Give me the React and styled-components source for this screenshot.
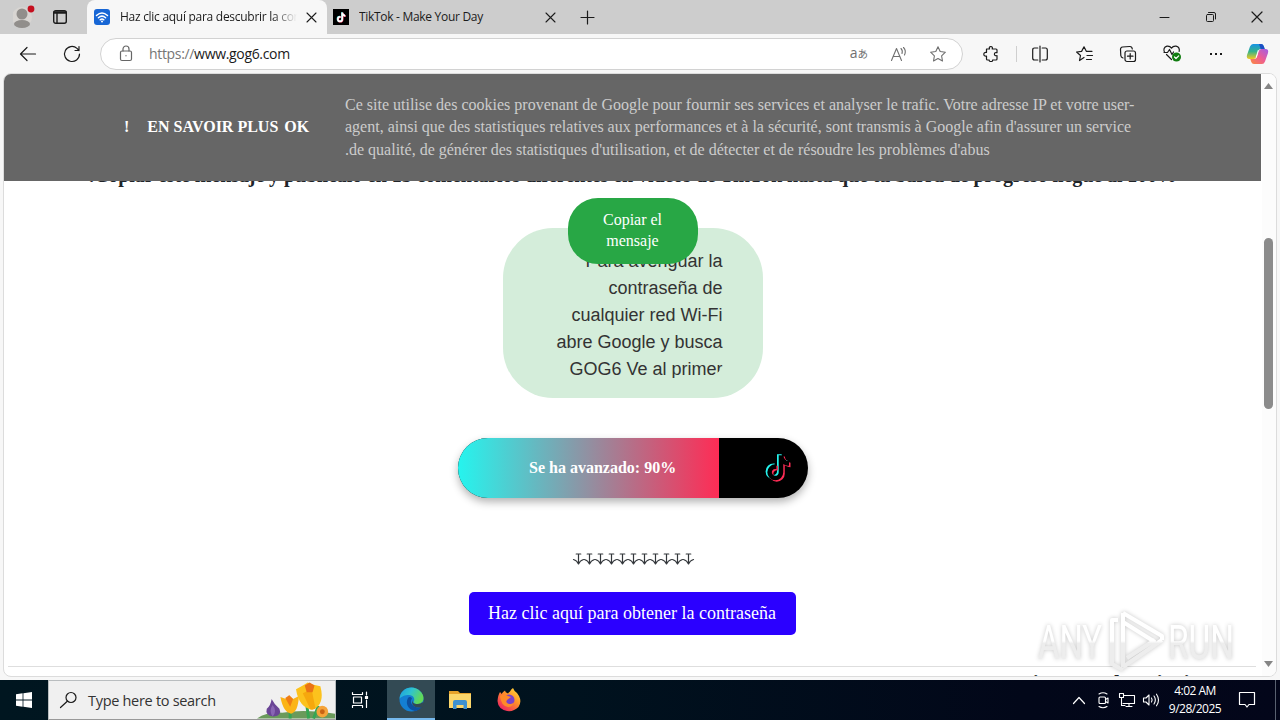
import styled, { createGlobalStyle, css } from 'styled-components';

// ========================== GLOBAL ==========================

const GlobalStyle = createGlobalStyle`
  * {
    box-sizing: border-box;
  }

  body {
    margin: 0;
    overflow: hidden;
    font-family: 'Open Sans', 'Noto Sans', sans-serif;
  }

  svg {
    display: block;
    flex-shrink: 0;
  }
`;

const Screen__styled = styled.div`
  width: 1280px;
  height: 720px;
  display: flex;
  flex-direction: column;
  overflow: hidden;
  background-color: #f7f7f7;
`;

const Stroke__styled = styled.svg`
  fill: none;
  stroke: ${props => props.$color || '#1b1b1b'};
  stroke-width: ${props => props.$weight || 1.2};
  stroke-linecap: round;
  stroke-linejoin: round;
  overflow: visible;
`;

// ========================== TABS ==========================

const TabBar__styled = styled.header`
  height: 34px;
  flex-shrink: 0;
  display: flex;
  align-items: center;
  background-color: #cdcdcd;
`;

const Profile__styled = styled.div`
  width: 87px;
  height: 34px;
  padding-left: 13px;
  display: flex;
  align-items: center;
  gap: 18px;
`;

const Tab__styled = styled.div`
  width: ${props => props.$width}px;
  height: 34px;
  padding: 0 11px 0 ${props => (props.$active ? 7 : 6)}px;
  display: flex;
  align-items: center;
  gap: 10px;

  ${props =>
    props.$active &&
    css`
      background-color: #f7f7f7;
      border-radius: 8px 8px 0 0;
    `};
`;

const TabTitle__styled = styled.span`
  flex: 1;
  overflow: hidden;
  white-space: nowrap;
  font-size: 12px;
  line-height: 18px;
  letter-spacing: ${props => props.$spacing}px;
  color: #1b1b1b;
  mask-image: ${props =>
    props.$fade ? 'linear-gradient(90deg, #000 86%, transparent 100%)' : 'none'};
`;

const NewTab__styled = styled.div`
  width: 42px;
  display: flex;
  justify-content: center;
`;

const WindowButtons__styled = styled.div`
  margin-left: auto;
  display: grid;
  grid-template-columns: repeat(3, 46px);
  justify-items: center;
  align-items: center;
`;

// ========================== TOOLBAR ==========================

const Toolbar__styled = styled.nav`
  height: 39px;
  flex-shrink: 0;
  padding-left: 20px;
  display: flex;
  align-items: center;
  background-color: #f7f7f7;
`;

const NavButtons__styled = styled.div`
  width: 80px;
  display: flex;
  gap: 28px;
`;

const AddressBar__styled = styled.div`
  width: 863px;
  height: 32px;
  padding: 0 16px 0 19px;
  display: flex;
  align-items: center;
  background-color: #fff;
  border: 1px solid #d2d2d2;
  border-radius: 16px;
`;

const Url__styled = styled.span`
  flex: 1;
  margin-left: 17px;
  font-size: 14px;
  letter-spacing: -0.33px;
  color: #1b1b1b;

  i {
    font-style: normal;
    color: #767676;
  }
`;

const AddressIcons__styled = styled.div`
  display: flex;
  align-items: center;
  gap: 23px;
`;

const Translate__styled = styled.span`
  font-size: 14px;
  line-height: 16px;
  color: #707070;

  small {
    font-family: 'Noto Sans CJK JP', sans-serif;
    font-size: 10.5px;
  }
`;

const ToolIcons__styled = styled.div`
  padding-left: 4px;
  display: grid;
  grid-template-columns: 48px 2px 45px repeat(4, 44px) 39px;
  align-items: center;
  justify-items: center;
`;

const Divider__styled = styled.div`
  width: 1px;
  height: 16px;
  background-color: #cfcfcf;
`;

// ========================== PAGE ==========================

const Frame__styled = styled.main`
  width: 1274px;
  height: 604px;
  margin: 0 0 3px 3px;
  flex-shrink: 0;
  display: flex;
  overflow: hidden;
  background-color: #fff;
  border: 1px solid #dcdcdc;
  border-radius: 8px;
`;

const Page__styled = styled.div`
  width: 1258px;
  height: 602px;
  display: flex;
  flex-direction: column;
  align-items: center;
  overflow: hidden;
  font-family: 'Liberation Serif', serif;
`;

const CookieBar__styled = styled.section`
  width: 1257px;
  height: 107px;
  flex-shrink: 0;
  align-self: flex-start;
  z-index: 1;
  padding-left: 120px;
  display: flex;
  align-items: center;
  background-color: #666;
`;

const CookieActions__styled = styled.div`
  width: 221px;
  padding-bottom: 2px;
  display: flex;
  font-size: 16px;
  font-weight: 700;
  line-height: 20px;
  color: #fff;

  span:nth-child(2) {
    margin: 0 6px 0 18px;
    white-space: nowrap;
  }
`;

const CookieText__styled = styled.p`
  margin: 0;
  font-size: 16px;
  line-height: 22.4px;
  color: #ccc;
  white-space: nowrap;
`;

const Instruction__styled = styled.h2`
  height: 30px;
  margin: -21px 0 8px;
  flex-shrink: 0;
  font-size: 20px;
  font-weight: 700;
  line-height: 30px;
  letter-spacing: -0.08px;
  color: #212529;
  white-space: nowrap;
`;

const CopyButton__styled = styled.button`
  width: 130px;
  height: 66px;
  flex-shrink: 0;
  z-index: 1;
  padding: 0 29px 3px 28px;
  border: 0;
  border-radius: 30px;
  background-color: #28a745;
  font-family: 'Liberation Serif', serif;
  font-size: 16px;
  line-height: 21px;
  color: #fff;
`;

const MessageBox__styled = styled.div`
  width: 260px;
  height: 170px;
  margin-top: -36px;
  flex-shrink: 0;
  padding: 20px 40px;
  border-radius: 50px;
  background-color: #d4edda;
`;

const Message__styled = styled.div`
  height: 130px;
  padding-right: 0.5px;
  overflow: hidden;
  border-radius: 26px / 14px;
  font-family: 'Liberation Sans', sans-serif;
  font-size: 18px;
  line-height: 27px;
  color: #333;
  text-align: right;
  white-space: nowrap;
`;

const Progress__styled = styled.div`
  width: 350px;
  height: 60px;
  margin-top: 40px;
  flex-shrink: 0;
  padding-right: 16px;
  display: flex;
  align-items: center;
  justify-content: space-between;
  overflow: hidden;
  border-radius: 30px;
  background-color: #000;
  box-shadow: 0 4px 8px rgba(0, 0, 0, 0.3);
`;

const ProgressFill__styled = styled.div`
  width: 261px;
  height: 60px;
  padding-left: 71px;
  background: linear-gradient(90deg, #25f4ee, #fe2c55);
  font-size: 16px;
  font-weight: 700;
  line-height: 60px;
  color: #fff;
`;

const Arrows__styled = styled.div`
  height: 24px;
  margin: 49px 0 0;
  flex-shrink: 0;
  display: flex;
  align-items: center;
`;

const PasswordButton__styled = styled.button`
  width: 327px;
  height: 43px;
  margin: 21px 2px 0 0;
  flex-shrink: 0;
  padding: 0;
  border: 0;
  border-radius: 5px;
  background-color: #2b00ff;
  font-family: 'Liberation Serif', serif;
  font-size: 18px;
  color: #fff;
`;

const Rule__styled = styled.hr`
  width: 1248px;
  height: 1px;
  margin: 31px 2px 0 0;
  flex-shrink: 0;
  border: 0;
  background-color: #dedede;
`;

const NextHeading__styled = styled.h3`
  width: 224px;
  margin: 4px 64px 0 0;
  flex-shrink: 0;
  align-self: flex-end;
  font-size: 22px;
  line-height: 24px;
  color: #212529;
  white-space: nowrap;
`;

const Scrollbar__styled = styled.div`
  width: 14px;
  height: 602px;
  padding: 9px 2px 9px 0;
  display: flex;
  flex-direction: column;
  align-items: center;
  background-color: #fcfcfc;
`;

const Thumb__styled = styled.div`
  width: 9px;
  height: 171px;
  margin: 149px 0 auto;
  border-radius: 5px;
  background-color: #8b8b8b;
`;

const Watermark__styled = styled.svg`
  position: absolute;
  left: 1030px;
  top: 602px;
  z-index: 2;
  overflow: visible;
  filter: drop-shadow(0 0 2px rgba(0, 0, 0, 0.22));
`;

// ========================== TASKBAR ==========================

const Taskbar__styled = styled.footer`
  height: 40px;
  flex-shrink: 0;
  position: relative;
  display: flex;
  background: linear-gradient(90deg, #001620 0%, #00121e 45%, #020719 80%, #03061a 100%);
`;

const TaskButton__styled = styled.div`
  width: ${props => props.$width || 49}px;
  height: 40px;
  display: flex;
  align-items: center;
  justify-content: center;

  ${props =>
    props.$active &&
    css`
      background-color: #334a54;
      border-bottom: 2px solid #76b9ed;
      padding-top: 1px;
    `};
`;

const Search__styled = styled.div`
  width: 288px;
  height: 40px;
  padding-left: 11px;
  display: flex;
  align-items: center;
  background-color: #f0f0f0;
  border: 1px solid #b9bdbf;
  border-bottom-color: #999;

  span {
    flex: 1;
    margin-left: 11px;
    font-size: 14.5px;
    letter-spacing: -0.3px;
    color: #333;
    white-space: nowrap;
  }
`;

const Tray__styled = styled.div`
  margin-left: auto;
  padding-right: 20px;
  display: flex;
  align-items: center;
  border-right: 1px solid #596170;
  margin-right: 4px;
`;

const TrayIcons__styled = styled.div`
  display: flex;
  align-items: center;
  gap: 8px;

  svg:first-child {
    margin-right: 2px;
  }
`;

const Clock__styled = styled.div`
  width: 54px;
  margin-right: 9px;
  font-size: 12px;
  line-height: 18px;
  letter-spacing: -0.5px;
  color: #fff;
  text-align: center;
  white-space: nowrap;
`;

// ========================== ICONS ==========================

const NOTE =
  'M13 2h4c.3 3 2.2 5 5 5.3v4c-1.9 0-3.6-.6-5-1.6V17a7 7 0 1 1-7-7l1 .1v4.1a3 3 0 1 0 2 2.8z';

const CloseIcon = ({ size = 9 }) => (
  <Stroke__styled width={size} height={size} viewBox="0 0 10 10">
    <path d="M0 0 10 10M10 0 0 10" />
  </Stroke__styled>
);

const ProfileIcon = () => (
  <svg width="22" height="24" viewBox="0 0 22 24">
    <circle cx="9" cy="12" r="10" fill="#d8d5d2" />
    <circle cx="9" cy="9" r="5.5" fill="#918e8b" />
    <ellipse cx="9" cy="19" rx="8" ry="4" fill="#918e8b" />
    <circle cx="18" cy="4" r="3.4" fill="#c50f1f" />
  </svg>
);

const WorkspaceIcon = () => (
  <Stroke__styled width="14" height="14" viewBox="0 0 14 14" $weight="1.4">
    <rect x=".7" y=".7" width="12.6" height="12.6" rx="2" />
    <path d="M1 3h12M4 3v10M1 2h12" />
  </Stroke__styled>
);

const WifiIcon = () => (
  <svg width="16" height="16" viewBox="0 0 16 16">
    <rect width="16" height="16" rx="3" fill="#1766d5" />
    <g fill="none" stroke="#fff" strokeWidth="1.5" strokeLinecap="round">
      <path d="M2.5 6.5q5.5-5 11 0M4.4 8.7q3.6-3.2 7.2 0M6.2 10.8q1.8-1.5 3.6 0" />
    </g>
    <circle cx="8" cy="12.5" r="1" fill="#fff" />
  </svg>
);

const TikTokTabIcon = () => (
  <svg width="16" height="16" viewBox="0 0 24 24">
    <rect width="24" height="24" fill="#000" />
    <g transform="translate(4 4) scale(.66)">
      <path d={NOTE} fill="#25f4ee" transform="translate(-.8 -.6)" />
      <path d={NOTE} fill="#fe2c55" transform="translate(.8 .6)" />
      <path d={NOTE} fill="#fff" />
    </g>
  </svg>
);

const TikTokIcon = () => (
  <svg width="30" height="32" viewBox="0 0 26 28">
    <path d={NOTE} fill="#25f4ee" />
    <path d={NOTE} fill="#fe2c55" transform="translate(2.800 2)" />
    <path d={NOTE} fill="#000" transform="translate(1.500 .8)" />
  </svg>
);

const ArrowDownIcon = () => (
  <Stroke__styled width="11" height="12" viewBox="0 0 11 12" $color="#33373b" $weight="1.200">
    <path d="M3.200 1h4.600M5.500 1v10M.5 6.500q3.500 1 5 4.500 1.500-3.500 5-4.500" />
  </Stroke__styled>
);

const CopilotIcon = () => (
  <svg width="23" height="22" viewBox="0 0 23 22">
    <defs>
      <linearGradient id="cpA" x1="0" y1="0" x2="0" y2="1">
        <stop offset="0" stopColor="#1793e6" />
        <stop offset=".5" stopColor="#35b38a" />
        <stop offset="1" stopColor="#f3c921" />
      </linearGradient>
      <linearGradient id="cpB" x1="1" y1="0" x2="0" y2="1">
        <stop offset="0" stopColor="#a05fe8" />
        <stop offset=".5" stopColor="#ee5d93" />
        <stop offset="1" stopColor="#fb8b3e" />
      </linearGradient>
    </defs>
    <path d="M7 1h8q2 0 2.700 2l1 3h-4q-2 0-2.600 2l-1.900 6q-.7 2-2.700 2H3.500Q0 16 1 12L4 3.500Q5 1 7 1z" fill="url(#cpA)" />
    <path d="M13 1h2q2 0 2.700 2l1 3h-4z" fill="#1c4fc4" />
    <path d="M16 21H8q-2 0-2.700-2l-1-3h4q2 0 2.600-2l1.900-6q.7-2 2.700-2h4Q23 6 22 10l-3 8.500Q18 21 16 21z" fill="url(#cpB)" />
    <path d="M12.600 7 10.800 14.500H9.600L11.900 7z" fill="#fff" />
  </svg>
);

const FlowersIcon = () => (
  <svg width="78" height="38" viewBox="0 0 80 38">
    <path d="M0 38Q10 31 26 32 48 28 80 33v5z" fill="#6a9a5b" />
    <path d="M34 38V26M53 38 51 24M58 38 63 25" stroke="#35a653" strokeWidth="3" fill="none" />
    <path d="M15 18q3 6 8 10 3 7-6 8-9-1-7-8 4-3 5-10z" fill="#6a4596" />
    <path d="M16 24q-4 6 0 12 5-6 0-12z" fill="#8965b4" />
    <path d="M24 16l6 2 3-4 4 4 6-3q-1 17-8 18-8-1-11-17z" fill="#fbb417" />
    <path d="M29 17l4-3 4 4-3 8z" fill="#ef7d16" />
    <path d="M40 8l7-4 5-3 5 2 8 2q5 19-8 24-14-2-17-21z" fill="#fcc21d" />
    <path d="M47 12l9-4 4 20-5 1z" fill="#f6a80d" />
    <path d="M49 4l5-3 5 3-2 7h-6z" fill="#ea7316" />
    <circle cx="67" cy="31" r="6" fill="#f5a43a" />
    <circle cx="67" cy="31" r="2.500" fill="#c96314" />
  </svg>
);

const EdgeIcon = () => (
  <svg width="25" height="25" viewBox="0 0 25 25">
    <defs>
      <linearGradient id="edgeTop" x1="0" y1="0" x2="1" y2=".4">
        <stop offset="0" stopColor="#1b9de2" />
        <stop offset=".5" stopColor="#2fc3cf" />
        <stop offset="1" stopColor="#62d957" />
      </linearGradient>
    </defs>
    <circle cx="12.500" cy="12.500" r="12" fill="#147fd3" />
    <path d="M.5 12C1 5 6 .5 12.500.5S24.500 6 24.500 11c0 4-3 6-6 6-3.500 0-4.500-1.500-3.500-3 1-2-.5-6-5-6-4 0-8 1.500-9.500 4z" fill="url(#edgeTop)" />
    <path d="M9 11c-3 5 0 12 7 13 3-.5 5.500-2 7-4.500-4 2-8 .5-10-2-1.500-2-1.500-4 0-6-1-2-3-2-4-.5z" fill="#0d4f9e" />
    <path d="M14 12c-1.500 3 .5 5 4.500 5 2 0 4-.8 5-2l1 3q-.6 1.500-1.300 2-5 1.500-8.500-1-3-3-.7-7z" fill="#334a54" />
  </svg>
);

const FolderIcon = () => (
  <svg width="22" height="20" viewBox="0 0 22 20">
    <path d="M0 1h9l2 2h11v4H0z" fill="#e6a22b" />
    <path d="M0 4h22v14H0z" fill="#fbd66b" />
    <path d="M4 19v-7q0-2 2-2h10q2 0 2 2v7h-3.500v-4h-7v4z" fill="#3d91d0" />
  </svg>
);

const FirefoxIcon = () => (
  <svg width="24" height="24" viewBox="0 0 24 24">
    <defs>
      <linearGradient id="fox" x1="1" y1="0" x2=".2" y2="1">
        <stop offset="0" stopColor="#ffe63c" />
        <stop offset=".45" stopColor="#ff9329" />
        <stop offset="1" stopColor="#ee1e63" />
      </linearGradient>
    </defs>
    <path d="M3 4q1 1 1.500 2Q6 3.500 8 2.500q0 2 3 3 1-1.500 2-2 1-2.500 3-3.500 1 3 4 5l2 3q3 6-.5 11-5 5-11.500 4Q1 21 .5 13 1 7 3 4z" fill="url(#fox)" />
    <circle cx="12" cy="12" r="5.500" fill="#7a42c9" />
    <path d="M3 8q4-3 8 0l3 1-4 3q-2 3 2 4 4 0 5-2-1 5-6 5-7-1-8-11z" fill="#ff8a28" />
  </svg>
);

// ========================== SECTIONS ==========================

const Tabs = () => (
  <TabBar__styled>
    <Profile__styled>
      <ProfileIcon />
      <WorkspaceIcon />
    </Profile__styled>
    <Tab__styled $active $width={240}>
      <WifiIcon />
      <TabTitle__styled $fade $spacing={-0.28}>
        Haz clic aquí para descubrir la contraseña
      </TabTitle__styled>
      <CloseIcon />
    </Tab__styled>
    <Tab__styled $width={239}>
      <TikTokTabIcon />
      <TabTitle__styled $spacing={-0.3}>TikTok - Make Your Day</TabTitle__styled>
      <CloseIcon />
    </Tab__styled>
    <NewTab__styled>
      <Stroke__styled width="13" height="13" viewBox="0 0 13 13">
        <path d="M6.500 0v13M0 6.500h13" />
      </Stroke__styled>
    </NewTab__styled>
    <WindowButtons__styled>
      <Stroke__styled width="10" height="10" viewBox="0 0 10 10" $weight="1">
        <path d="M0 5.500h9" />
      </Stroke__styled>
      <Stroke__styled width="10" height="10" viewBox="0 0 10 10" $weight="1">
        <rect x=".5" y="2.500" width="7" height="7" rx="1" />
        <path d="M2.500.5H8q1.500 0 1.500 1.500v5" />
      </Stroke__styled>
      <CloseIcon size={10} />
    </WindowButtons__styled>
  </TabBar__styled>
);

const BrowserToolbar = () => (
  <Toolbar__styled>
    <NavButtons__styled>
      <Stroke__styled width="16" height="16" viewBox="0 0 16 16">
        <path d="M15.500 8H.5M7 1.500.5 8 7 14.500" />
      </Stroke__styled>
      <Stroke__styled width="16" height="16" viewBox="0 0 16 16">
        <path d="M15.500 8A7.500 7.500 0 1 1 13 2.400L15 4.500M15 .5v4h-4" />
      </Stroke__styled>
    </NavButtons__styled>
    <AddressBar__styled>
      <Stroke__styled width="12" height="15" viewBox="0 0 12 15" $color="#666">
        <rect x=".5" y="5" width="11" height="9.500" rx="1.500" />
        <path d="M3 5V3a3 3 0 0 1 6 0v2M6 9.500v.3" />
      </Stroke__styled>
      <Url__styled>
        <i>https://</i>www.gog6.com
      </Url__styled>
      <AddressIcons__styled>
        <Translate__styled>
          a<small>あ</small>
        </Translate__styled>
        <Stroke__styled width="16" height="14" viewBox="0 0 16 14" $color="#707070" $weight="1.1">
          <path d="M.5 13.500 5.500 1.500l5 12M2 9.500h7M10 1.500q2 2 1 5M12.500.5q3 3 1 7.500" />
        </Stroke__styled>
        <Stroke__styled width="16" height="16" viewBox="0 0 16 16" $color="#707070" $weight="1.1">
          <path d="m8 .8 2.200 4.700 5.200.7-3.800 3.600.9 5.200L8 12.500 3.500 15l.9-5.200L.6 6.200l5.200-.7z" />
        </Stroke__styled>
      </AddressIcons__styled>
    </AddressBar__styled>
    <ToolIcons__styled>
      <Stroke__styled width="16" height="16" viewBox="0 0 16 16">
        <path d="M3.500 3h3q-.8-2.300 1.300-2.500Q10 .7 9.200 3H13q1 0 1 1v2.700q-2.500-.5-2.600 1.500.1 1.900 2.600 1.500V13q0 1-1 1H9.500q.5 1.500-1.500 1.500T6.200 14H4.500q-1 0-1-1v-3Q.9 10.500.8 8.200q.1-2.100 2.700-1.700z" />
      </Stroke__styled>
      <Divider__styled />
      <Stroke__styled width="16" height="16" viewBox="0 0 16 16">
        <path d="M8 0v16M5.800 2H2.500Q.7 2 .7 4v8q0 2 1.800 2h3.300M10.200 2h3.300q1.800 0 1.800 2v8q0 2-1.800 2h-3.300" />
      </Stroke__styled>
      <Stroke__styled width="17" height="16" viewBox="0 0 17 16">
        <path d="M8 11.500 3.500 14.500l1-5L.6 6l5-.6L8 .8l2.300 4.500H16M11 9.500h5.500M10.500 13.500h5" />
      </Stroke__styled>
      <Stroke__styled width="16" height="16" viewBox="0 0 16 16">
        <path d="M3 12Q1 11.500.8 9.500L.5 3.500Q.5 1.200 2.500 1l7-.5Q12 .3 12.300 3" />
        <rect x="5" y="5" width="10.500" height="10.500" rx="2" />
        <path d="M10.200 7.500v5.500M7.500 10.200H13" />
      </Stroke__styled>
      <Stroke__styled width="18" height="17" viewBox="0 0 18 17">
        <path d="M1.500 7.500Q-.5 2.500 4 1.200q3-.3 4.500 2Q10 .900 13 1.200q4 1 3.200 5.300M1 7.500h3.500l2-3 2.500 5 1.500-2.500M3.500 9.500l5 5" />
        <circle cx="13.500" cy="12" r="4.500" fill="#107c10" stroke="none" />
        <path d="m11.500 12 1.500 1.500 2.700-2.700" stroke="#fff" />
      </Stroke__styled>
      <svg width="14" height="4" viewBox="0 0 14 4">
        <path d="M1 1h2v2H1zM6 1h2v2H6zM11 1h2v2h-2z" fill="#1b1b1b" />
      </svg>
      <CopilotIcon />
    </ToolIcons__styled>
  </Toolbar__styled>
);

const WebPage = () => (
  <Page__styled>
    <CookieBar__styled>
      <CookieActions__styled>
        <span>!</span>
        <span>EN SAVOIR PLUS</span>
        <span>OK</span>
      </CookieActions__styled>
      <CookieText__styled>
        Ce site utilise des cookies provenant de Google pour fournir ses services et analyser le trafic. Votre adresse IP et votre user-
        <br />
        agent, ainsi que des statistiques relatives aux performances et à la sécurité, sont transmis à Google afin d'assurer un service
        <br />
        .de qualité, de générer des statistiques d'utilisation, et de détecter et de résoudre les problèmes d'abus
      </CookieText__styled>
    </CookieBar__styled>
    <Instruction__styled>
      .Copiar este mensaje y publícalo en 15 comentarios diferentes en vídeos de TikTok hasta que tu barra de progreso llegue al 100%
    </Instruction__styled>
    <CopyButton__styled>Copiar el mensaje</CopyButton__styled>
    <MessageBox__styled>
      <Message__styled>
        Para averiguar la
        <br />
        contraseña de
        <br />
        cualquier red Wi-Fi
        <br />
        abre Google y busca
        <br />
        GOG6 Ve al primer
      </Message__styled>
    </MessageBox__styled>
    <Progress__styled>
      <ProgressFill__styled>Se ha avanzado: 90%</ProgressFill__styled>
      <TikTokIcon />
    </Progress__styled>
    <Arrows__styled>
      {Array.from({ length: 11 }, (_, i) => (
        <ArrowDownIcon key={i} />
      ))}
    </Arrows__styled>
    <PasswordButton__styled>Haz clic aquí para obtener la contraseña</PasswordButton__styled>
    <Rule__styled />
    <NextHeading__styled>Consejos Google Wi-Fi</NextHeading__styled>
  </Page__styled>
);

const TaskbarRow = () => (
  <Taskbar__styled>
    <TaskButton__styled $width={48}>
      <svg width="16" height="16" viewBox="0 0 16 16" fill="#fff">
        <path d="M0 2.200 6.600 1.300v6.300H0zM7.400 1.200 16 0v7.600H7.400zM0 8.400h6.600v6.300L0 13.800zM7.400 8.400H16V16l-8.600-1.200z" />
      </svg>
    </TaskButton__styled>
    <Search__styled>
      <Stroke__styled width="17" height="16" viewBox="0 0 17 16" $weight="1.200">
        <circle cx="11" cy="5.500" r="5" />
        <path d="M7.300 9.200.5 15.500" />
      </Stroke__styled>
      <span>Type here to search</span>
      <FlowersIcon />
    </Search__styled>
    <TaskButton__styled $width={51}>
      <Stroke__styled width="20" height="16" viewBox="0 0 20 16" $color="#fff" $weight="1.200">
        <path d="M.5.500v2h10v-2M.5 15.500v-2h10v2M1.500 5h8v6h-8zM14.500 0v3M14.500 8v7.500" />
        <path d="M13.500 4.500h2v2h-2z" fill="#fff" />
      </Stroke__styled>
    </TaskButton__styled>
    <TaskButton__styled $active $width={48}>
      <EdgeIcon />
    </TaskButton__styled>
    <TaskButton__styled>
      <FolderIcon />
    </TaskButton__styled>
    <TaskButton__styled>
      <FirefoxIcon />
    </TaskButton__styled>
    <Tray__styled>
      <TrayIcons__styled>
        <Stroke__styled width="12" height="7" viewBox="0 0 12 7" $color="#fff">
          <path d="m.5 6.500 5.500-6 5.500 6" />
        </Stroke__styled>
        <Stroke__styled width="16" height="16" viewBox="0 0 16 16" $color="#fff" $weight="1.100">
          <rect x="4" y="5" width="6.500" height="6.500" rx="1" />
          <path d="m10.500 7.500 2.500-1.500v5l-2.500-1.500M4 2q4-2.500 8 0M4 14.500q4 2.500 8 0" />
        </Stroke__styled>
        <Stroke__styled width="16" height="14" viewBox="0 0 16 14" $color="#fff" $weight="1.100">
          <path d="M5 2.500h10.500v8H4M7 13.500h6M10 10.500v3M.5.500h4v4h-4zM2.500 4.500v8H6" />
        </Stroke__styled>
        <Stroke__styled width="17" height="14" viewBox="0 0 17 14" $color="#fff" $weight="1.100">
          <path d="M.5 5h2.500l3-3v10l-3-3H.5zM8.500 5q1.300 2 0 4M11 3q2.700 4 0 8M13.500 1.200q4 5.800 0 11.600" />
        </Stroke__styled>
        <Clock__styled>
          4:02 AM
          <br />
          9/28/2025
        </Clock__styled>
        <Stroke__styled width="16" height="16" viewBox="0 0 16 16" $color="#fff">
          <path d="M.5.500h15v12H10l-2 2.500-2-2.500H.5z" />
        </Stroke__styled>
      </TrayIcons__styled>
    </Tray__styled>
  </Taskbar__styled>
);

export default function App() {
  return (
    <Screen__styled>
      <GlobalStyle />
      <Tabs />
      <BrowserToolbar />
      <Frame__styled>
        <WebPage />
        <Scrollbar__styled>
          <svg width="9" height="6" viewBox="0 0 9 6">
            <path d="M4.500 0 9 6H0z" fill="#858585" />
          </svg>
          <Thumb__styled />
          <svg width="9" height="6" viewBox="0 0 9 6">
            <path d="M4.500 6 9 0H0z" fill="#858585" />
          </svg>
        </Scrollbar__styled>
      </Frame__styled>
      <TaskbarRow />
      <Watermark__styled width="210" height="76" viewBox="0 0 210 76">
        <defs>
          <linearGradient id="mark" gradientUnits="userSpaceOnUse" x1="0" y1="10" x2="0" y2="68">
            <stop offset=".5" stopColor="#fff" />
            <stop offset=".54" stopColor="#ededed" />
          </linearGradient>
        </defs>
        <g fill="url(#mark)" fontFamily="Roboto, sans-serif" fontSize="48">
          <text x="8" y="57" textLength="64" lengthAdjust="spacingAndGlyphs">ANY</text>
          <text x="138" y="57" textLength="66" lengthAdjust="spacingAndGlyphs">RUN</text>
        </g>
        <g fill="none" stroke="url(#mark)" strokeWidth="4" strokeLinejoin="round">
          <path d="M93 11v54M93 65l39-27M93 11l39 23v4M88 18h-6v44l11 6M93 20l32 20M97 56l28-18" />
        </g>
      </Watermark__styled>
    </Screen__styled>
  );
}
